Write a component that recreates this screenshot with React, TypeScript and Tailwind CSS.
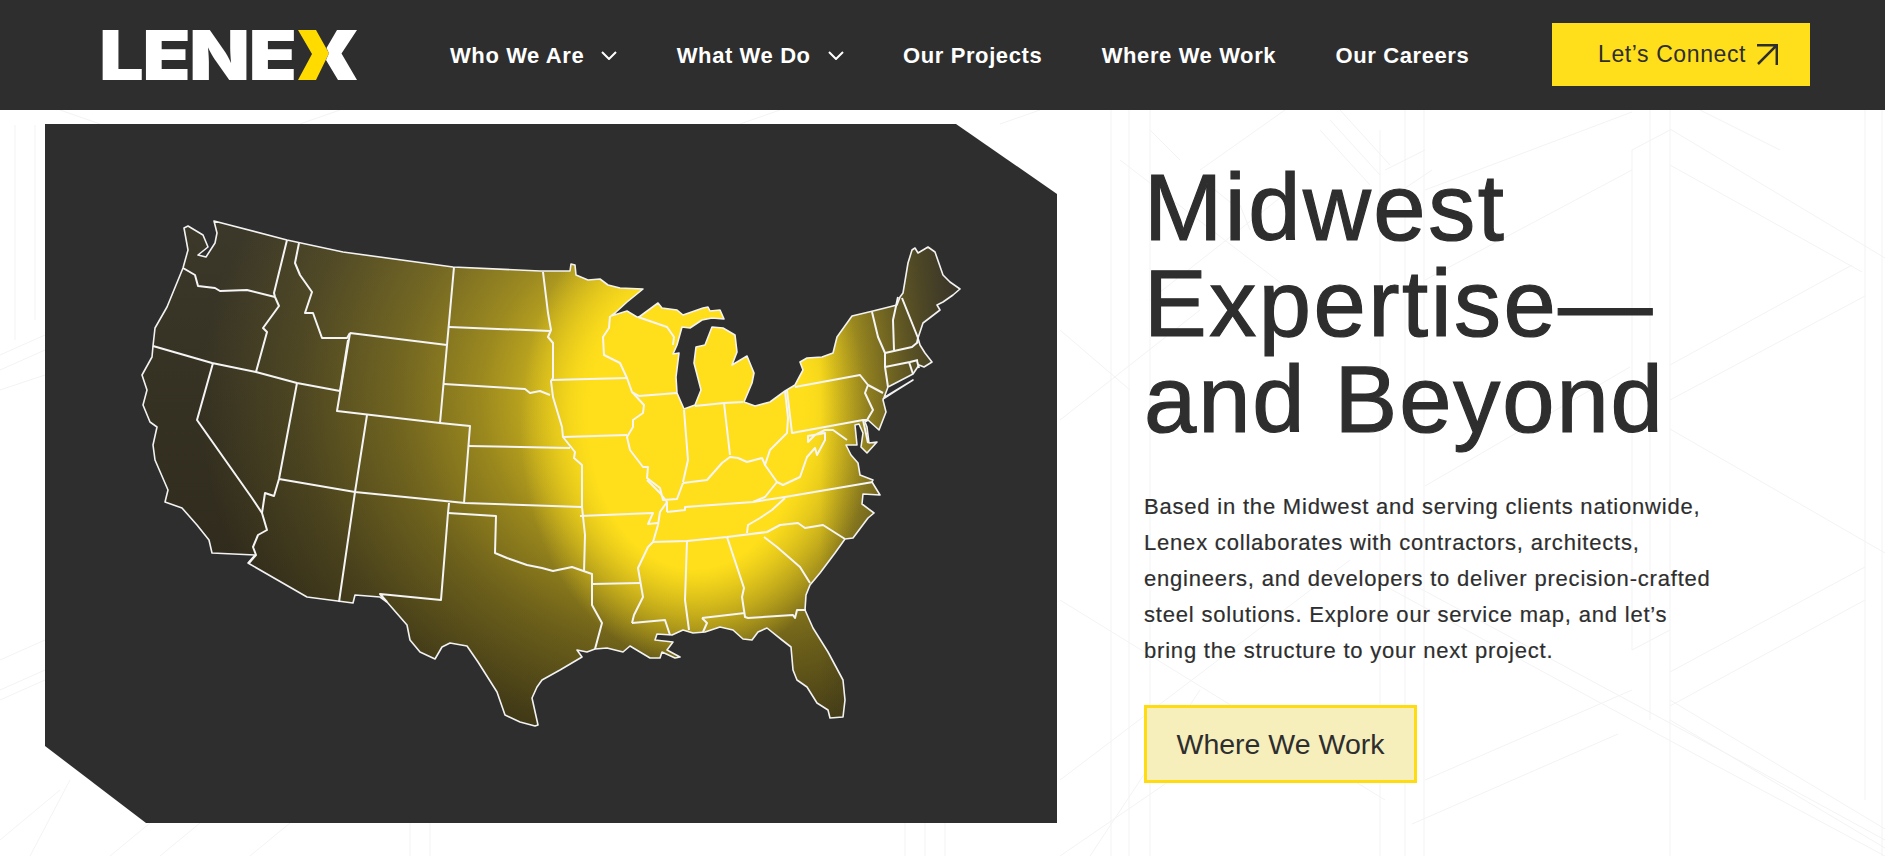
import React from 'react';

const NAV = [
  { label: 'Who We Are', caret: true },
  { label: 'What We Do', caret: true },
  { label: 'Our Projects', caret: false },
  { label: 'Where We Work', caret: false },
  { label: 'Our Careers', caret: false },
];

const LAND =
  'M214,221 287,240 343,252 453,267 540,271 570,271 571,264 575,265 576,275 588,280 600,279 608,285 620,288 643,289 627,302 615,313 611,316 627,311 637,317 639,317 658,303 662,308 677,310 683,315 703,308 708,307 710,311 720,310 724,319 712,318 702,320 690,328 682,327 677,345 673,354 679,353 676,377 677,393 684,409 695,405 701,390 694,363 696,347 705,345 712,327 723,328 735,335 737,352 732,365 747,356 754,373 752,383 744,402 755,406 770,402 785,391 795,385 803,370 800,362 807,358 822,357 833,353 837,337 852,316 873,311 897,305 900,297 903,293 908,263 912,250 915,248 918,253 928,247 935,252 943,275 950,282 960,289 953,295 943,302 937,305 940,310 923,323 918,338 920,345 925,353 932,362 924,367 919,365 913,374 888,387 885,395 883,400 886,412 879,430 868,420 865,422 867,427 869,443 877,442 867,453 861,447 863,433 859,424 855,425 857,445 846,445 851,455 858,463 860,475 873,480 872,482 880,495 863,494 862,504 874,513 868,518 853,538 845,539 835,553 820,573 810,585 806,595 805,610 813,628 828,652 843,680 845,700 843,717 830,718 828,710 817,703 807,687 797,680 793,670 791,647 782,640 767,628 758,632 752,640 743,639 733,630 720,627 705,632 693,633 683,630 672,635 657,634 655,640 673,642 667,650 680,657 675,658 662,652 660,658 650,658 640,652 630,646 623,652 607,648 595,649 587,652 577,650 582,657 560,670 542,680 537,687 532,698 538,725 535,726 520,722 505,715 497,692 478,662 467,646 450,643 442,647 435,659 420,652 410,640 407,625 387,602 380,597 355,595 353,603 307,597 248,563 255,555 212,553 209,540 197,525 182,508 165,502 168,490 155,460 153,445 157,427 150,422 143,405 147,390 142,375 152,357 153,346 155,328 167,307 183,268 188,250 184,228 188,226 203,235 208,247 198,255 206,257 215,243 217,233 Z M885,397 913,380 897,390 883,399 Z';

const BORDERS = [
  '183,268 195,275 198,286 215,288 220,291 247,290 275,297',
  '275,297 279,306 263,328 267,332 256,372',
  '287,240 274,293 275,297',
  '153,346 212,363 256,372 297,383 340,391',
  '213,363 197,420 252,498 262,513',
  '297,383 279,479 274,496 265,493 262,513 267,530 258,535 253,547 256,555 249,563',
  '299,243 295,263 300,275 312,292 305,313 313,313 322,338 347,338 350,333',
  '350,333 447,345 440,423 337,411 350,333',
  '348,340 340,391',
  '367,415 355,492 339,602',
  '279,479 355,492 465,503 582,507',
  '440,423 470,426 464,503',
  '454,267 447,345',
  '449,327 550,331',
  '444,384 525,389 530,393 540,391 550,395',
  '468,446 570,448',
  '543,272 548,313 551,330 548,337 553,343 553,378 551,381 553,397 562,427 563,437 575,452 574,458 582,465 582,507 585,535 584,572',
  '551,380 627,378',
  '563,437 627,435',
  '610,316 609,328 603,337 604,355 620,363 627,378 632,392 644,405 643,413 633,420 633,427 627,437 630,450 643,467 648,467 647,478 660,488 663,500 677,499 683,483',
  '632,392 639,396 677,393',
  '638,317 667,327 674,337 673,345',
  '684,410 688,460 683,482',
  '695,406 724,403 743,402',
  '724,403 730,455',
  '683,483 707,480 722,463 730,457 738,458 747,462 762,458 765,465 770,450 777,443 787,433 788,418 785,391',
  '787,390 792,433 863,420 867,420 873,410 865,393 868,385 860,375 795,387',
  '868,385 883,393',
  '863,420 868,443',
  '765,465 777,482 783,485 800,477 807,457 815,448 817,455 825,440 825,433 808,436 808,442 815,435 825,430 833,430 847,440',
  '777,482 765,497 753,502',
  '667,512 685,510 685,507 753,502 785,497 873,482',
  '785,498 772,510 760,518 748,525 747,533',
  '653,542 687,541 727,537 767,532 780,525 798,523 805,528 823,525 845,539',
  '764,537 777,547 792,560 800,567 810,583',
  '727,537 744,588 742,597 745,617 748,618 793,615 795,618 797,610 806,610',
  '702,618 745,613',
  '702,618 707,623 703,632',
  '687,541 685,600 689,630',
  '632,623 665,620 670,635',
  '632,623 634,615 643,597 638,568 648,547 653,542 658,525 660,512 667,502 660,493 647,480',
  '580,516 653,513 648,524 658,523',
  '667,502 667,512',
  '448,513 496,516 495,553 507,558 527,565 542,568 553,571 572,567 592,574 592,605 602,623 595,649',
  '449,503 448,513 441,600 380,594 387,602',
  '592,584 640,583',
  '872,312 878,337 885,353 885,367 888,387',
  '898,297 893,320 894,350',
  '902,298 918,338 917,343',
  '885,353 912,347 918,342',
  '885,367 910,362 918,360',
  '909,362 913,374',
  '917,361 919,368',
];

// faint structural drawing behind the page
const SKETCH = [
  [1405, 110, 1405, 856], [1424, 110, 1424, 856], [1632, 150, 1632, 650], [1650, 110, 1650, 720],
  [1670, 110, 1670, 856], [1865, 110, 1865, 800], [1882, 110, 1882, 856], [1111, 110, 1111, 856],
  [1129, 110, 1129, 856], [1150, 110, 1150, 856], [1380, 130, 1380, 856], [15, 125, 15, 340],
  [35, 125, 35, 320], [410, 823, 410, 856], [430, 823, 430, 856], [905, 823, 905, 856], [925, 823, 925, 856],
  [945, 823, 945, 856],
  [1670, 129, 1885, 258], [1670, 165, 1862, 272], [1670, 429, 1885, 553], [1670, 700, 1885, 829],
  [1670, 720, 1885, 848], [1385, 586, 1702, 758], [1702, 758, 1885, 856], [1395, 575, 1720, 750],
  [1720, 750, 1885, 840], [1060, 600, 1385, 800], [1120, 160, 1290, 290], [1060, 330, 1130, 390],
  [1670, 365, 1852, 265], [1670, 400, 1865, 296], [1670, 672, 1865, 567], [1670, 706, 1865, 600],
  [1425, 486, 1630, 367], [1412, 824, 1618, 734], [1425, 780, 1632, 690], [1425, 280, 1632, 170],
  [1425, 190, 1632, 112], [1150, 300, 1290, 190], [1060, 780, 1350, 560], [1090, 856, 1200, 690],
  [1060, 420, 1200, 310], [1200, 760, 1060, 856], [0, 355, 45, 335], [0, 370, 45, 350], [0, 390, 45, 375],
  [0, 690, 45, 670], [0, 700, 45, 680], [0, 660, 45, 640], [0, 840, 60, 790], [30, 856, 70, 780],
  [110, 856, 190, 790], [160, 856, 240, 790], [250, 856, 330, 790], [60, 110, 100, 124], [300, 124, 340, 110],
  [740, 124, 780, 110], [1000, 124, 1040, 110], [1700, 110, 1780, 150], [1285, 110, 1200, 170],
  [1340, 110, 1390, 165], [1330, 120, 1380, 175], [1320, 130, 1370, 185], [1215, 190, 1240, 210], [1240, 205, 1250, 230],
  [1150, 130, 1180, 160], [1385, 170, 1425, 150], [1380, 205, 1432, 170], [1632, 150, 1670, 130], [1632, 650, 1670, 630],
];

export default function App() {
  return (
    <div className="relative h-[856px] overflow-hidden bg-white font-['Liberation_Sans',sans-serif] text-[#2e2e2e]">
      <svg className="absolute inset-0 h-full w-full" viewBox="0 0 1885 856" fill="none" stroke="#f3f3f3" strokeWidth="1">
        {SKETCH.map((l, i) => (
          <line key={i} x1={l[0]} y1={l[1]} x2={l[2]} y2={l[3]} />
        ))}
      </svg>

      <header className="relative flex h-[110px] items-center bg-[#2e2e2e] pl-[102px] pr-[75px]">
        <div className="flex h-[50px] w-[255px] items-center">
          <span className="-ml-[3px] w-[199px] shrink-0 origin-left scale-x-[1.15] whitespace-nowrap font-['Inter',sans-serif] text-[69px] font-black leading-none tracking-[-1.5px] text-white">LENE</span>
          <svg className="h-[50px] w-[59px] shrink-0" viewBox="0 0 59 50" aria-hidden="true">
            <polygon points="0,0 18,0 31,23.3 18,50 0,50 14,24" fill="#ffdb00" />
            <polygon points="39,0 59,0 43.5,23.5 59,50 40,50 28,30 31,23.3 28.5,18" fill="#fff" />
          </svg>
        </div>
        <nav className="ml-[93px] flex items-center gap-[59.4px] text-[22px] font-bold tracking-[0.6px] text-white">
          {NAV.map((item) => (
            <a key={item.label} href="#" className="flex items-center gap-[17px] whitespace-nowrap">
              {item.label}
              {item.caret && (
                <svg className="h-[9px] w-[16px]" viewBox="0 0 16 9" fill="none" stroke="#fff" strokeWidth="2">
                  <path d="M1 1l7 7 7-7" />
                </svg>
              )}
            </a>
          ))}
        </nav>
        <a href="#" className="mb-[1px] ml-auto flex h-[63px] w-[258px] items-center gap-[10px] bg-[#ffdf1b] pl-[46px] text-[23px] tracking-[0.6px] text-[#2e2e2e]">
          Let’s Connect
          <svg className="h-[21px] w-[22px]" viewBox="0 0 22 21" fill="none" stroke="#2e2e2e" strokeWidth="2.5">
            <path d="M1 1.2h19.8v20M20.8 1.2L2 20" />
          </svg>
        </a>
      </header>

      <main className="relative flex pl-[45px] pt-[14px]">
        <div className="h-[699px] w-[1012px] shrink-0 bg-[#2e2e2e] [clip-path:polygon(0_0,911px_0,100%_70px,100%_100%,101px_100%,0_622px)]">
          <svg className="block h-full w-full" viewBox="45 124 1012 699" aria-label="Map of the United States">
            <defs>
              <clipPath id="land">
                <path d={LAND} clipRule="evenodd" />
              </clipPath>
              <linearGradient id="base" x1="0" y1="0" x2="0" y2="1">
                <stop offset="0" stopColor="#3c382a" />
                <stop offset="1" stopColor="#2a2515" />
              </linearGradient>
              <radialGradient id="glow">
                <stop offset="0" stopColor="#ffdf1b" />
                <stop offset="0.2" stopColor="#ffdf1b" />
                <stop offset="0.28" stopColor="#ffdf1b" stopOpacity="0.78" />
                <stop offset="0.44" stopColor="#ffdf1b" stopOpacity="0.5" />
                <stop offset="0.6" stopColor="#ffdf1b" stopOpacity="0.3" />
                <stop offset="0.8" stopColor="#ffdf1b" stopOpacity="0.12" />
                <stop offset="1" stopColor="#ffdf1b" stopOpacity="0" />
              </radialGradient>
              <radialGradient id="core">
                <stop offset="0" stopColor="#ffdf1b" />
                <stop offset="0.6" stopColor="#ffdf1b" />
                <stop offset="1" stopColor="#ffdf1b" stopOpacity="0" />
              </radialGradient>
              <linearGradient id="east" gradientUnits="userSpaceOnUse" x1="820" y1="0" x2="960" y2="0">
                <stop offset="0" stopColor="#33301f" stopOpacity="0" />
                <stop offset="1" stopColor="#38342a" />
              </linearGradient>
            </defs>
            <g clipPath="url(#land)">
              <rect x="120" y="210" width="860" height="530" fill="url(#base)" />
              <ellipse cx="700" cy="400" rx="500" ry="430" fill="url(#glow)" />
              <ellipse cx="695" cy="425" rx="175" ry="240" fill="url(#core)" />
              <rect x="820" y="124" width="237" height="699" fill="url(#east)" />
            </g>
            <path d={LAND} fill="none" stroke="#f2f2f2" strokeWidth="1.6" strokeLinejoin="round" />
            <g fill="none" stroke="#f5f5f5" strokeWidth="2" strokeLinejoin="round">
              {BORDERS.map((pts, i) => (
                <polyline key={i} points={pts} />
              ))}
            </g>
          </svg>
        </div>

        <section className="ml-[87px] flex w-[620px] flex-col items-start pt-[36px]">
          <h1 className="text-[94px] font-normal leading-[96px] tracking-[2.5px] [-webkit-text-stroke:1.2px_#2e2e2e]">
            Midwest
            <br />
            Expertise—
            <br />
            <span className="tracking-[1.9px]">and Beyond</span>
          </h1>
          <p className="mt-[41px] text-[22px] leading-[36px] tracking-[0.8px] [-webkit-text-stroke:0.2px_#2e2e2e]">
            Based in the Midwest and serving clients nationwide,
            <br />
            Lenex collaborates with contractors, architects,
            <br />
            engineers, and developers to deliver precision-crafted
            <br />
            steel solutions. Explore our service map, and let’s
            <br />
            bring the structure to your next project.
          </p>
          <a href="#" className="mt-[36px] flex h-[78px] w-[273px] items-center justify-center border-[3px] border-[#ffdb12] bg-[#f6eebb] text-[28.5px]">
            Where We Work
          </a>
        </section>
      </main>
    </div>
  );
}
